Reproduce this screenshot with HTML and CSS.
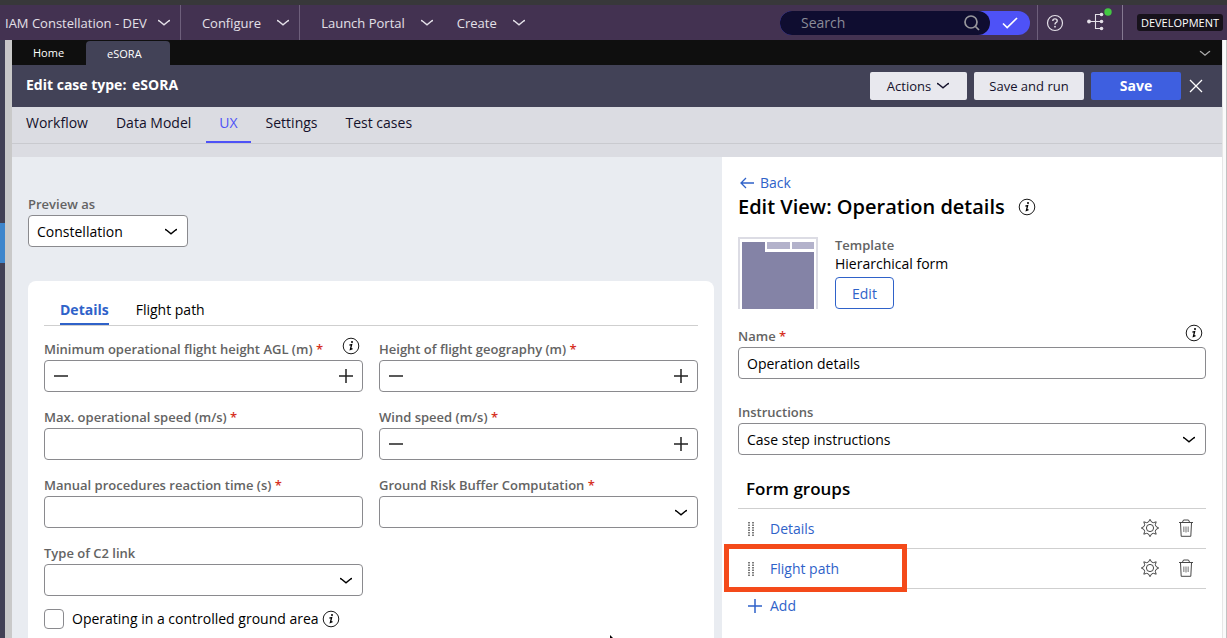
FILE: index.html
```html
<!DOCTYPE html>
<html lang="en">
<head>
<meta charset="utf-8">
<title>Edit case type: eSORA</title>
<link rel="stylesheet" href="styles.css">
</head>
<body>
<svg class="defs" aria-hidden="true">
  <symbol id="chev" viewBox="0 0 14 8"><path d="M1 1.5Q2 1.5 3 2.6L7 5.9L11 2.6Q12 1.5 13 1.5" fill="none" stroke="currentColor" stroke-width="1.4"/></symbol>
  <symbol id="info" viewBox="0 0 18 18"><circle cx="9" cy="9" r="7.8" fill="none" stroke="currentColor" stroke-width=".9"/><circle cx="10" cy="5" r="1" fill="currentColor"/><path d="M7.4 8.2L9.6 7.6L8.4 12.4L10.5 11.6" fill="none" stroke="currentColor" stroke-width="1.3"/></symbol>
  <symbol id="minus" viewBox="0 0 16 16"><path d="M1 8H15" stroke="currentColor" stroke-width="1.5"/></symbol>
  <symbol id="plus" viewBox="0 0 16 16"><path d="M1 8H15M8 1V15" stroke="currentColor" stroke-width="1.5"/></symbol>
  <symbol id="gear" viewBox="0 0 20 20"><path d="M10 1.3L11.5 4L13.3 4.7L16.2 3.8L15.3 6.7L16 8.5L18.7 10L16 11.5L15.3 13.3L16.2 16.2L13.3 15.3L11.5 16L10 18.7L8.5 16L6.7 15.3L3.8 16.2L4.7 13.3L4 11.5L1.3 10L4 8.5L4.7 6.7L3.8 3.8L6.7 4.7L8.5 4Z" fill="none" stroke="currentColor" stroke-width=".9" stroke-linejoin="round"/><circle cx="10" cy="10" r="3.6" fill="none" stroke="currentColor" stroke-width=".9"/></symbol>
  <symbol id="trash" viewBox="0 0 16 20"><path d="M1 4.5H15M4.5 4L5.5 2H10.5L11.5 4M2.5 5L3.2 18.3H12.8L13.5 5" fill="none" stroke="currentColor" stroke-width=".9"/><path d="M5.8 8.5V14M8 8.5V14.5M10.2 8.5V14" stroke="#999" stroke-width="1.4"/></symbol>
  <symbol id="grip" viewBox="0 0 6 16"><path d="M1 1V15M5 1V15" stroke="currentColor" stroke-width="1.4" stroke-dasharray="1.4 1.1"/></symbol>
</svg>

<header class="topbar">
  <button class="top-item top-app">IAM Constellation - DEV<svg class="chev"><use href="#chev"/></svg></button>
  <button class="top-item top-configure">Configure<svg class="chev"><use href="#chev"/></svg></button>
  <button class="top-item top-launch">Launch Portal<svg class="chev"><use href="#chev"/></svg></button>
  <button class="top-item top-create">Create<svg class="chev"><use href="#chev"/></svg></button>
  <div class="search">
    <div class="search-box">
      <input type="text" placeholder="Search" aria-label="Search">
      <svg class="search-icon" viewBox="0 0 18 18"><circle cx="8" cy="8" r="6" fill="none" stroke="currentColor" stroke-width="1.7"/><path d="M12.5 12.5L16 16" stroke="currentColor" stroke-width="1.7"/></svg>
    </div>
    <button class="search-go" aria-label="Go"><svg viewBox="0 0 16 12"><path d="M1 6.5L5.2 10.5L15 1" fill="none" stroke="currentColor" stroke-width="1.7"/></svg></button>
  </div>
  <div class="top-tools">
    <button class="icon-button" aria-label="Help"><svg class="help" viewBox="0 0 18 18"><circle cx="9" cy="9" r="7.5" fill="none" stroke="currentColor" stroke-width="1.2"/><path d="M6.8 7Q6.8 4.9 9 4.9T11.2 6.9Q11.2 8 9.9 8.7Q9 9.2 9 10.5" fill="none" stroke="currentColor" stroke-width="1.4"/><circle cx="9" cy="12.7" r=".9" fill="currentColor"/></svg></button>
    <button class="icon-button" aria-label="Branches"><svg class="branches" viewBox="0 0 26 24"><path d="M3 14.5H16M16 7.5H9.5V21.5H16" fill="none" stroke="currentColor" stroke-width="1.1"/><g fill="currentColor"><circle cx="3" cy="14.5" r="1.9"/><circle cx="15.5" cy="7.5" r="1.8"/><circle cx="15.5" cy="14.5" r="1.8"/><circle cx="15.5" cy="21.5" r="1.8"/></g><circle cx="22" cy="5" r="3.7" fill="#43c843"/></svg></button>
  </div>
  <div class="env"><span>DEVELOPMENT</span></div>
</header>

<div class="shell">
  <aside class="rail"><span class="rail-mark"></span></aside>
  <main class="main">
    <nav class="doc-tabs" aria-label="Open documents">
      <a href="#home" class="doc-tab">Home</a>
      <a href="#esora" class="doc-tab active">eSORA</a>
      <button class="icon-button tabs-more" aria-label="More tabs"><svg class="chev-small"><use href="#chev"/></svg></button>
    </nav>
    <div class="case-header">
      <h1>Edit case type: <span>eSORA</span></h1>
      <button class="btn btn-light btn-actions">Actions<svg class="chev"><use href="#chev"/></svg></button>
      <button class="btn btn-light btn-run">Save and run</button>
      <button class="btn btn-save">Save</button>
      <button class="icon-button close" aria-label="Close"><svg viewBox="0 0 14 14"><path d="M1 1L13 13M13 1L1 13" stroke="currentColor" stroke-width="1.3"/></svg></button>
    </div>
    <nav class="sections" aria-label="Case type">
      <a href="#workflow">Workflow</a><a href="#data">Data Model</a><a href="#ux" class="active">UX</a><a href="#settings">Settings</a><a href="#tests">Test cases</a>
    </nav>
    <div class="panes">
      <section class="preview">
        <div class="field preview-as">
          <label for="preview-as">Preview as</label>
          <div class="select"><select id="preview-as"><option>Constellation</option></select><svg class="chev"><use href="#chev"/></svg></div>
        </div>
        <div class="card">
          <nav class="card-tabs" aria-label="Form groups">
            <a href="#details" class="active">Details</a><a href="#flight-path">Flight path</a>
          </nav>
          <form class="form">
            <div class="field">
              <div class="label-row"><label for="min-height">Minimum operational flight height AGL (m) <b>*</b></label><button type="button" class="icon-button" aria-label="About this field"><svg class="info"><use href="#info"/></svg></button></div>
              <div class="stepper"><button type="button" aria-label="Decrease"><svg><use href="#minus"/></svg></button><input id="min-height" type="text"><button type="button" aria-label="Increase"><svg><use href="#plus"/></svg></button></div>
            </div>
            <div class="field">
              <label for="height">Height of flight geography (m) <b>*</b></label>
              <div class="stepper"><button type="button" aria-label="Decrease"><svg><use href="#minus"/></svg></button><input id="height" type="text"><button type="button" aria-label="Increase"><svg><use href="#plus"/></svg></button></div>
            </div>
            <div class="field">
              <label for="speed">Max. operational speed (m/s) <b>*</b></label>
              <input id="speed" class="box" type="text">
            </div>
            <div class="field">
              <label for="wind">Wind speed (m/s) <b>*</b></label>
              <div class="stepper"><button type="button" aria-label="Decrease"><svg><use href="#minus"/></svg></button><input id="wind" type="text"><button type="button" aria-label="Increase"><svg><use href="#plus"/></svg></button></div>
            </div>
            <div class="field">
              <label for="reaction">Manual procedures reaction time (s) <b>*</b></label>
              <input id="reaction" class="box" type="text">
            </div>
            <div class="field">
              <label for="buffer">Ground Risk Buffer Computation <b>*</b></label>
              <div class="select"><select id="buffer"><option></option></select><svg class="chev"><use href="#chev"/></svg></div>
            </div>
            <div class="field">
              <label for="c2">Type of C2 link</label>
              <div class="select"><select id="c2"><option></option></select><svg class="chev"><use href="#chev"/></svg></div>
            </div>
          </form>
          <div class="check"><input id="controlled" type="checkbox"><label for="controlled">Operating in a controlled ground area</label><button type="button" class="icon-button" aria-label="About this field"><svg class="info"><use href="#info"/></svg></button></div>
        </div>
      </section>

      <section class="editor">
        <a class="back" href="#back"><svg viewBox="0 0 14 12"><path d="M14 6H1M6 1L1 6L6 11" fill="none" stroke="currentColor" stroke-width="1.3"/></svg>Back</a>
        <div class="title"><h2>Edit View: Operation details</h2><button class="icon-button" aria-label="About this view"><svg class="info"><use href="#info"/></svg></button></div>
        <div class="template">
          <svg class="thumb" viewBox="0 0 80 72"><path d="M1 72V1H79V72" fill="#fff" stroke="#dcdce4" stroke-width="2"/><path d="M4 5H27V15H76V72H4Z" fill="#8483a6"/><path d="M29 5H52V12H29ZM54 5H76V12H54Z" fill="#b3b2cb"/></svg>
          <div class="template-text">
            <span class="caption">Template</span>
            <span>Hierarchical form</span>
            <button class="btn-outline">Edit</button>
          </div>
        </div>
        <div class="field name">
          <div class="label-row"><label for="name">Name <b>*</b></label><button class="icon-button" aria-label="About name"><svg class="info"><use href="#info"/></svg></button></div>
          <input id="name" class="box" type="text" value="Operation details">
        </div>
        <div class="field instructions">
          <label for="instructions">Instructions</label>
          <div class="select"><select id="instructions"><option>Case step instructions</option></select><svg class="chev"><use href="#chev"/></svg></div>
        </div>
        <h3>Form groups</h3>
        <ul class="groups">
          <li><svg class="grip"><use href="#grip"/></svg><a href="#g-details">Details</a><button class="icon-button" aria-label="Configure Details"><svg class="gear"><use href="#gear"/></svg></button><button class="icon-button" aria-label="Delete Details"><svg class="trash"><use href="#trash"/></svg></button></li>
          <li><svg class="grip"><use href="#grip"/></svg><a href="#g-flight">Flight path</a><button class="icon-button" aria-label="Configure Flight path"><svg class="gear"><use href="#gear"/></svg></button><button class="icon-button" aria-label="Delete Flight path"><svg class="trash"><use href="#trash"/></svg></button><span class="highlight"></span></li>
        </ul>
        <button class="add"><svg><use href="#plus"/></svg>Add</button>
      </section>
    </div>
  </main>
  <div class="scroll-track"></div>
</div>
<svg class="pointer" viewBox="0 0 4 3" aria-hidden="true"><path d="M0 0L3 3H0Z"/></svg>
</body>
</html>
```
FILE: styles.css
```css
* { box-sizing: border-box; }
body {
  margin: 0;
  height: 100vh;
  overflow: hidden;
  display: flex;
  flex-direction: column;
  font: 14px/20px "Open Sans", sans-serif;
  color: #000;
  background: #fff;
}
button, input, select { font: inherit; color: inherit; }
button { border: 0; padding: 0; background: none; cursor: pointer; }
a { color: inherit; text-decoration: none; }
h1, h2, h3, ul { margin: 0; padding: 0; }
svg { display: block; flex: none; }
.defs { position: absolute; width: 0; height: 0; }
.chev { width: 14px; height: 8px; }
.chev-small { width: 12px; height: 7px; }
.info { width: 18px; height: 18px; }
.icon-button { display: flex; align-items: center; justify-content: center; flex: none; }
.pointer { position: absolute; left: 610px; bottom: 0; width: 4px; height: 3px; }

/* Top bar */
.topbar {
  display: flex;
  flex: none;
  height: 40px;
  border-top: 5px solid #38383a;
  background: #433251;
  color: #e4e0e8;
  font-size: 13px;
}
.top-item { display: flex; align-items: center; white-space: nowrap; }
.top-app { gap: 10px; padding: 0 9px 0 5px; border-right: 1px solid #6e5f7b; }
.top-configure { gap: 15px; padding: 0 9px 0 21px; border-right: 1px solid #6e5f7b; }
.top-launch { gap: 15px; padding-left: 21px; }
.top-create { gap: 15px; padding-left: 23px; }
.search {
  display: flex;
  align-self: center;
  width: 250px;
  height: 24px;
  margin: 0 7px 0 auto;
  border-radius: 12px;
  background: #4e52f7;
}
.search-box { display: flex; align-items: center; flex: 1; min-width: 0; padding: 0 9px 0 21px; border-radius: 12px; background: #0f0d30; }
.search-box input { flex: 1; min-width: 0; padding: 0; border: 0; outline: 0; background: none; font-size: 14px; }
.search-box input::placeholder { color: #8b8b98; opacity: 1; }
.search-icon { width: 18px; height: 18px; color: #98979c; }
.search-go { display: flex; align-items: center; justify-content: center; flex: none; width: 40px; color: #fff; }
.search-go svg { width: 16px; height: 12px; }
.top-tools { display: flex; gap: 22px; padding: 0 10px 0 8px; border-left: 1px solid #6e5f7b; }
.help { width: 18px; height: 18px; }
.branches { width: 26px; height: 24px; margin-bottom: 8px; }
.env { display: flex; align-items: center; padding: 0 4px 0 14px; border-left: 1px solid #857991; }
.env span { padding: 0 4px; border-radius: 3px; background: #17121b; color: #fff; font-size: 11px; line-height: 17px; }

/* Shell */
.shell { display: flex; flex: 1; min-height: 0; }
.rail { flex: none; width: 12px; padding-top: 183px; border-right: 7px solid #c9c9c9; background: #424155; }
.rail-mark { display: block; height: 40px; background: #3e86cc; }
.scroll-track { flex: none; width: 5px; border-left: 1px solid #e6e6e6; border-right: 1px solid #c2c2c2; background: #fafafa; }
.main { display: flex; flex: 1; flex-direction: column; min-width: 0; }
.doc-tabs { display: flex; flex: none; height: 25px; padding-top: 1px; background: #0f0f0f; color: #fff; font-size: 11px; line-height: 24px; }
.doc-tab { padding: 0 22px 0 21px; }
.doc-tab.active { padding: 1px 28px 0 21px; border-radius: 4px 4px 0 0; background: #424257; }
.tabs-more { margin: 0 11px 0 auto; color: #aaa; }

.case-header { display: flex; align-items: center; flex: none; height: 42px; padding: 0 19px 0 14px; background: #424257; }
.case-header h1 { margin: 0 auto 3px 0; color: #fff; font-size: 14px; line-height: 20px; }
.case-header h1 span { margin-left: 2px; }
.btn { display: flex; align-items: center; justify-content: center; gap: 5px; height: 28px; border-radius: 2px; font-size: 13px; }
.btn-light { background: #e8e8ee; color: #14112b; }
.btn-actions { width: 97px; }
.btn-run { width: 110px; margin: 0 7px; }
.btn-save { width: 90px; background: #3e5fe0; color: #fff; font-size: 14px; font-weight: 700; }
.close { margin-left: 8px; color: #fff; }
.close svg { width: 14px; height: 14px; }

.sections { display: flex; flex: none; height: 50px; padding-left: 1px; border-bottom: 13px solid #dbdce2; box-shadow: inset 0 -1px #c9cacf; background: #dbdce2; color: #14112b; }
.sections a { padding: 6px 13px 0; margin-right: 2px; }
.sections a.active { height: 36px; border-bottom: 2px solid #4e52f7; color: #4e52f7; }

/* Panes */
.panes { display: grid; flex: 1; grid-template-columns: 710fr 500fr; min-height: 0; }
.preview { padding: 38px 8px 0 16px; background: #e9ecf1; overflow: hidden; }
.editor { padding: 16px 16px 0; background: #fff; }

.field { display: flex; flex-direction: column; min-width: 0; }
.field label, .caption { padding-bottom: 2px; color: #636363; font-size: 13px; font-weight: 600; line-height: 18px; white-space: nowrap; }
.field label b { color: #d6301f; font-weight: 600; }
.label-row { display: flex; justify-content: space-between; height: 20px; padding-right: 3px; }
.label-row .info { margin-bottom: 8px; }
.box, .select select, .stepper {
  width: 100%;
  height: 32px;
  padding: 0 8px;
  border: 1px solid #8a8a8e;
  border-radius: 4px;
  background: #fff;
}
.select { position: relative; }
.select select { appearance: none; padding-top: 1px; }
.select .chev { position: absolute; top: 13px; right: 10px; pointer-events: none; }
.stepper { display: flex; align-items: center; }
.stepper input { flex: 1; min-width: 0; border: 0; outline: 0; background: none; }
.stepper svg { width: 16px; height: 16px; color: #222; }

.preview-as { width: 160px; }
.card { height: 400px; margin-top: 34px; padding: 16px; border-radius: 8px 8px 0 0; background: #fff; }
.card-tabs { display: flex; gap: 27px; padding-left: 16px; border-bottom: 1px solid #cfcfcf; }
.card-tabs a { height: 28px; padding-top: 3px; }
.card-tabs a.active { border-bottom: 2px solid #2f62c9; color: #2f62c9; font-weight: 700; }
.form { display: grid; grid-template-columns: 1fr 1fr; gap: 16px; margin-top: 14px; }
.check { display: flex; align-items: center; margin-top: 12px; }
.check input { appearance: none; width: 20px; height: 20px; margin: 0 8px 0 0; border: 1px solid #8a8a8e; border-radius: 4px; background: #fff; }
.check label { padding-top: 1px; }
.check .icon-button { margin-left: 3px; }

/* View editor */
.back { display: flex; align-items: center; gap: 6px; padding-left: 2px; color: #2f62c9; }
.back svg { width: 14px; height: 12px; }
.title { display: flex; align-items: center; gap: 13px; }
.title h2 { font-size: 20px; font-weight: 600; line-height: 28px; }
.template { display: flex; gap: 17px; margin-top: 16px; }
.thumb { width: 80px; height: 72px; }
.template-text { display: flex; flex-direction: column; align-items: flex-start; }
.template-text span { padding: 0; line-height: 18px; }
.template-text .caption { line-height: 17px; padding-bottom: 1px; }
.btn-outline { height: 32px; margin-top: auto; padding: 1px 16px 0; border: 1px solid #2f62c9; border-radius: 4px; color: #2f62c9; }
.name { margin-top: 18px; }
.instructions { margin-top: 24px; }
.editor h3 { margin-top: 20px; padding: 0 8px 5px; border-bottom: 1px solid #cfcfcf; font-size: 17px; font-weight: 600; line-height: 28px; }
.groups { list-style: none; }
.groups li { position: relative; display: flex; align-items: center; height: 40px; padding: 0 12px 0 10px; border-bottom: 1px solid #cfcfcf; }
.groups a { margin: 0 auto 0 16px; color: #2f62c9; }
.groups .icon-button { padding-bottom: 2px; }
.grip { width: 6px; height: 16px; color: #444; }
.gear { width: 20px; height: 20px; color: #333; }
.trash { width: 16px; height: 20px; margin-left: 18px; color: #333; }
.highlight { position: absolute; top: -5px; left: -14px; width: 183px; height: 48px; border: 5px solid #f44a1a; pointer-events: none; }
.add { display: flex; align-items: center; gap: 7px; margin-top: 7px; padding-left: 9px; color: #2f62c9; }
.add svg { width: 16px; height: 16px; }
```
